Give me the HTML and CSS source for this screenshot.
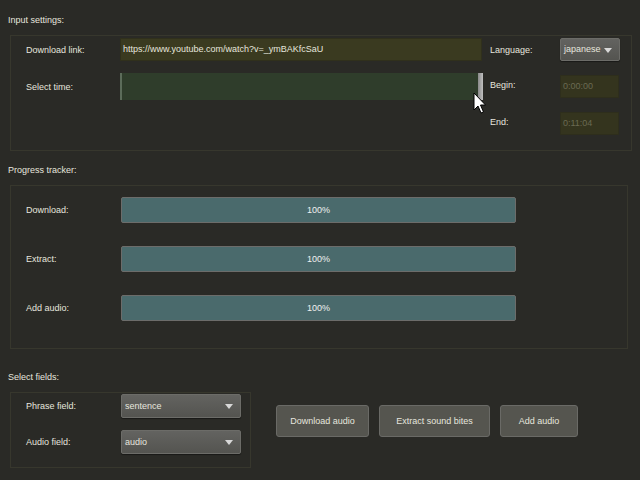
FILE: index.html
```html
<!DOCTYPE html>
<html>
<head>
<meta charset="utf-8">
<link rel="stylesheet" href="styles.css">
</head>
<body>
<div class="app">
  <div class="group-title">Input settings:</div>
  <div class="frame input-frame">
    <div class="lbl">Download link:</div>
    <div class="url">https://www.youtube.com/watch?v=_ymBAKfcSaU</div>
    <div class="lbl lbl2">Language:</div>
    <div class="combo lang">japanese<span class="arrow"></span></div>

    <div class="lbl">Select time:</div>
    <div class="slider"><span class="handle"></span></div>
    <div class="lbl lbl2 lbl-up">Begin:</div>
    <div class="time">0:00:00</div>

    <div class="lbl"></div>
    <div></div>
    <div class="lbl lbl2 lbl-up">End:</div>
    <div class="time">0:11:04</div>
  </div>

  <div class="group-title t2">Progress tracker:</div>
  <div class="frame progress-frame">
    <div class="prow"><div class="lbl">Download:</div><div class="bar">100%</div></div>
    <div class="prow"><div class="lbl">Extract:</div><div class="bar">100%</div></div>
    <div class="prow"><div class="lbl">Add audio:</div><div class="bar">100%</div></div>
  </div>

  <div class="group-title t3">Select fields:</div>
  <div class="bottom">
    <div class="frame fields-frame">
      <div class="frow"><div class="lbl">Phrase field:</div><div class="combo field">sentence<span class="arrow"></span></div></div>
      <div class="frow"><div class="lbl">Audio field:</div><div class="combo field">audio<span class="arrow"></span></div></div>
    </div>
    <div class="buttons">
      <div class="btn b1">Download audio</div>
      <div class="btn b2">Extract sound bites</div>
      <div class="btn b3">Add audio</div>
    </div>
  </div>

  <svg class="cursor" width="14" height="24" viewBox="0 0 14 24"><path d="M1 1 L1 18 L5 14 L8 21 L10.5 20 L7.5 13 L12.5 13 Z" fill="#fff" stroke="#000" stroke-width="1"/></svg>
</div>
</body>
</html>
```

FILE: styles.css
```css
html, body {
  margin: 0;
  padding: 0;
  background: #2a2a26;
}
.app {
  position: relative;
  width: 640px;
  height: 480px;
  box-sizing: border-box;
  padding: 13px 0 0 8px;
  font-family: "Liberation Sans", Arial, sans-serif;
  font-size: 9px;
  color: #e6e6de;
  overflow: hidden;
}
.group-title {
  height: 14px;
  line-height: 14px;
  margin-bottom: 8px;
}
.t2 { margin-top: 12px; }
.t3 { margin-top: 21px; }
.frame {
  border: 1px solid #37372d;
  margin-left: 2px;
  box-sizing: border-box;
}
.lbl {
  line-height: 14px;
  align-self: center;
}
.input-frame {
  width: 622px;
  height: 116px;
  padding: 2px 0 0 15px;
  display: grid;
  grid-template-columns: 94px 362px 78px 60px;
  grid-template-rows: 23px 27px 23px;
  row-gap: 12px;
  column-gap: 0;
}
.lbl2 { padding-left: 8px; }
.lbl-up { margin-top: -4px; }
.url {
  background: #3a3a20;
  border: 1px solid #30301c;
  line-height: 21px;
  padding-left: 2px;
}
.combo {
  position: relative;
  background: linear-gradient(#636360, #545450);
  border: 1px solid #6c6c68;
  border-radius: 2px;
  box-sizing: border-box;
  padding-left: 3px;
  line-height: 21px;
  box-shadow: 0 1px 1px rgba(0,0,0,0.4);
}
.arrow {
  position: absolute;
  right: 7px;
  top: 9px;
  width: 0;
  height: 0;
  border-left: 4px solid transparent;
  border-right: 4px solid transparent;
  border-top: 5px solid #d8d8d8;
}
.slider {
  position: relative;
  width: 360px;
  background: #2f3d2b;
  border-left: 2px solid #5c6c5a;
  box-sizing: border-box;
}
.handle {
  position: absolute;
  right: -3px;
  top: 0;
  width: 5px;
  height: 27px;
  background: linear-gradient(90deg, #8a8a8a, #c0c0c0);
}
.time {
  width: 59px;
  height: 23px;
  align-self: center;
  background: #34341e;
  border: 1px solid #2e2e1c;
  box-sizing: border-box;
  color: #6a6a52;
  line-height: 21px;
  padding-left: 2px;
}
.progress-frame {
  width: 618px;
  height: 164px;
  padding: 11px 0 0 15px;
  display: flex;
  flex-direction: column;
  gap: 23px;
}
.prow {
  display: grid;
  grid-template-columns: 95px 395px;
  height: 26px;
}
.bar {
  background: #4a6a6c;
  border: 1px solid #6c6c6a;
  border-radius: 2px;
  box-sizing: border-box;
  text-align: center;
  line-height: 24px;
  color: #f0f0f0;
}
.bottom {
  display: flex;
  align-items: flex-start;
}
.fields-frame {
  width: 241px;
  height: 76px;
  padding: 1px 0 0 15px;
  display: flex;
  flex-direction: column;
  gap: 12px;
}
.frow {
  display: grid;
  grid-template-columns: 95px 120px;
  height: 24px;
}
.field { line-height: 22px; }
.buttons {
  display: flex;
  gap: 10px;
  margin-left: 25px;
  margin-top: 13px;
}
.btn {
  height: 32px;
  line-height: 30px;
  background: #55554f;
  border: 1px solid #6a6a66;
  border-radius: 3px;
  box-sizing: border-box;
  text-align: center;
}
.b1 { width: 93px; }
.b2 { width: 111px; }
.b3 { width: 78px; }
.cursor {
  position: absolute;
  left: 473px;
  top: 92px;
}
```
